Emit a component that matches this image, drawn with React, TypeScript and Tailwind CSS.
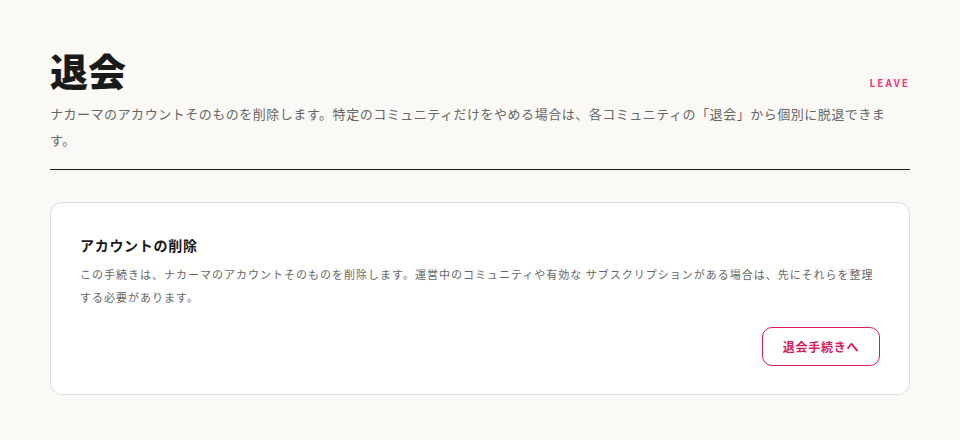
export default function App() {
  return (
    <div
      className="min-h-[440px] w-full bg-[#faf9f6] px-[50px] pt-[44px]"
      style={{ fontFamily: '"Noto Sans CJK JP", "Noto Sans", sans-serif' }}
    >
      <div className="flex items-end justify-between">
        <h1 className="text-[38px] font-black leading-[52px] text-[#1a1a1a]">退会</h1>
        <span className="mb-[6px] text-[10px] font-semibold tracking-[0.2em] text-[#ee3a78]">LEAVE</span>
      </div>
      <p className="mt-[5px] text-[13px] leading-[26px] tracking-[0.04em] text-[#666]">
        ナカーマのアカウントそのものを削除します。特定のコミュニティだけをやめる場合は、各コミュニティの「退会」から個別に脱退できます。
      </p>
      <div className="mt-[16px] h-px bg-[#1a1a1a]" />
      <div className="mt-[32px] rounded-[12px] border border-[#dcdcdc] bg-white px-[29px] pb-[28px] pt-[30px]">
        <h2 className="text-[14px] font-bold leading-[24px] tracking-[0.05em] text-[#1a1a1a]">アカウントの削除</h2>
        <p className="mt-[6px] text-[11px] leading-[23px] tracking-[1px] text-[#666]">
          この手続きは、ナカーマのアカウントそのものを削除します。運営中のコミュニティや有効な サブスクリプションがある場合は、先にそれらを整理する必要があります。
        </p>
        <div className="mt-[18px] flex justify-end">
          <button className="h-[39px] w-[118px] rounded-[10px] border border-[#d81b60] text-[12px] font-bold tracking-[0.06em] text-[#d81b60]">
            退会手続きへ
          </button>
        </div>
      </div>
    </div>
  );
}
